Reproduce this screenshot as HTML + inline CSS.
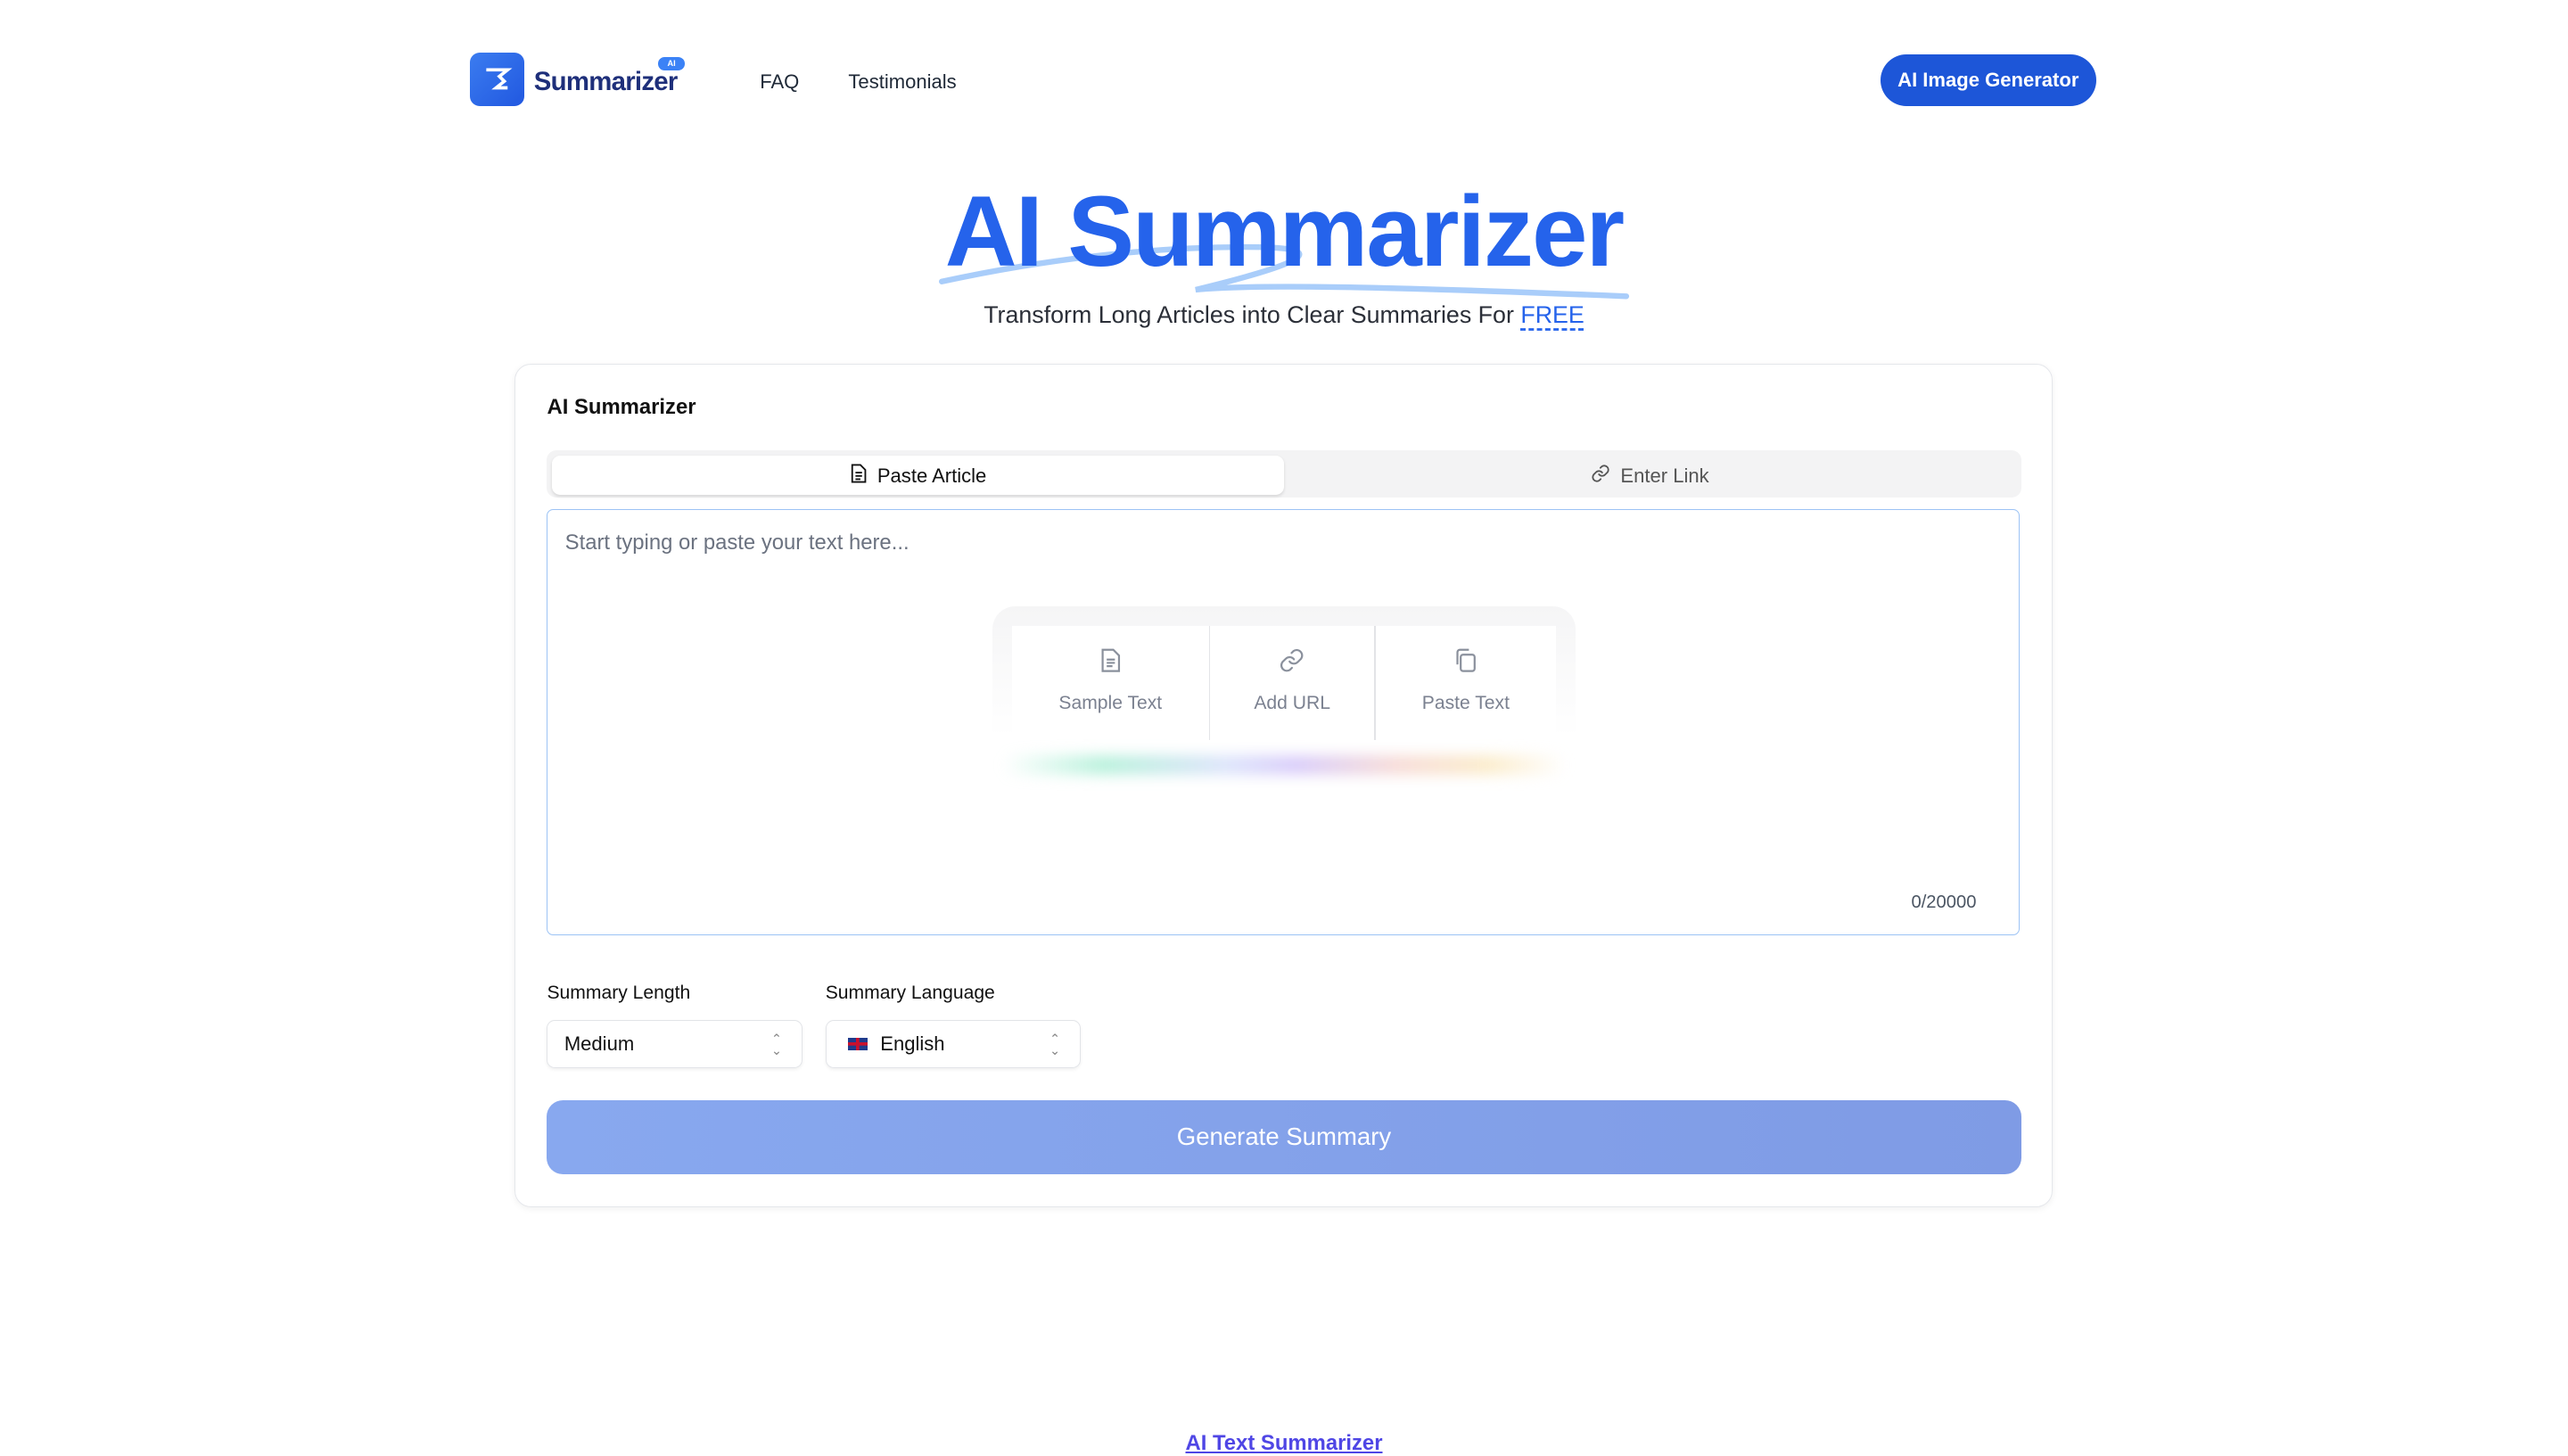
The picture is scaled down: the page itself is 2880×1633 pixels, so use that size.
<!DOCTYPE html>
<html><head><meta charset="utf-8">
<style>
html,body{margin:0;padding:0;background:#fff;}
body{width:1568px;height:882px;zoom:1.836735;position:relative;overflow:hidden;font-family:"Liberation Sans",sans-serif;color:#111827;}
.a{position:absolute;}
.logo{left:287px;top:32px;width:33px;height:33px;border-radius:6px;background:linear-gradient(135deg,#3b7cf0,#2158e0);}
.brand{left:326px;top:41px;font-size:16px;font-weight:bold;color:#1e2f7a;letter-spacing:-0.4px;}
.badge{left:402px;top:35px;width:16px;height:8px;border-radius:4px;background:#3b82f6;color:#fff;font-size:5px;font-weight:bold;text-align:center;line-height:8px;}
.nav{top:43px;font-size:12px;color:#1f2937;}
.btn{left:1148px;top:33px;width:132px;height:32px;border-radius:16px;background:#1d56d8;color:#fff;font-weight:bold;font-size:12px;text-align:center;line-height:32px;}
.title{left:0;width:1568px;top:106px;text-align:center;font-size:61px;font-weight:bold;color:#2563eb;letter-spacing:-1px;}
.sub{left:0;width:1568px;top:184px;text-align:center;font-size:14.6px;color:#2b2f38;}
.sub span{color:#2563eb;text-decoration:underline dashed;text-underline-offset:3px;}
.card{left:314px;top:222px;width:938px;height:514px;border:1px solid #e5e7eb;border-radius:10px;box-shadow:0 1px 4px rgba(0,0,0,.06);}
.tabs{left:334px;top:275px;width:900px;height:29px;background:#f3f3f4;border-radius:6px;}
.tab1{left:337px;top:278px;width:447px;height:24px;background:#fff;border-radius:5px;box-shadow:0 1px 2px rgba(0,0,0,.12);font-size:12px;text-align:center;line-height:25px;color:#111;}
.tab2{left:784px;top:278px;width:447px;height:24px;font-size:12px;text-align:center;line-height:25px;color:#555;}
.ta{left:334px;top:311px;width:898px;height:259px;border:1px solid #9cc3f5;border-radius:4px;}
.ph{left:345px;top:324px;font-size:13px;color:#6b7280;}
.qa{left:606px;top:370px;width:356px;height:100px;border-radius:14px;background:linear-gradient(#f5f5f6,#fff 80%);}
.qi{top:382px;height:70px;background:#fff;text-align:center;font-size:11.5px;color:#7b8190;}
.qi svg{display:block;margin:13px auto 12px;}
.glow{left:612px;top:461px;width:344px;height:12px;border-radius:6px;filter:blur(4px);background:linear-gradient(90deg,rgba(160,240,220,0),#b9f1dc 18%,#dde4fb 40%,#d9cdfa 52%,#f7dcd8 70%,#fbeccb 86%,rgba(255,240,200,0));}
.cnt{left:1167px;top:545px;font-size:11px;color:#4b5563;}
.lbl{top:600px;font-size:11.5px;color:#111;}
.sel{top:623px;width:155px;height:28px;border:1px solid #e2e4e8;border-radius:5px;box-shadow:0 1px 2px rgba(0,0,0,.06);font-size:12px;line-height:28px;color:#111;}
.gen{left:334px;top:672px;width:900px;height:45px;border-radius:10px;background:linear-gradient(90deg,#88a8ef,#7f9be5);color:#fff;font-size:15px;text-align:center;line-height:45px;}
.bot{left:0;width:1568px;top:874px;text-align:center;font-size:13px;font-weight:bold;color:#4f46e5;text-decoration:underline;}
</style></head><body>
<div class="a logo"><svg width="33" height="33" viewBox="0 0 33 33"><path d="M10 10.5h13l-5 4 3 3-5 4h7" stroke="#fff" stroke-width="2" fill="none"/></svg></div>
<div class="a brand">Summarizer</div>
<div class="a badge">AI</div>
<div class="a nav" style="left:464px">FAQ</div>
<div class="a nav" style="left:518px">Testimonials</div>
<div class="a btn">AI Image Generator</div>

<svg class="a" style="left:570px;top:140px" width="430" height="50" viewBox="0 0 430 50"><path d="M5 32 C60 20 130 10 200 11 C240 12 230 20 160 37 C200 33 300 36 423 41" stroke="#a9cdfa" stroke-width="3.5" fill="none" stroke-linecap="round"/></svg>
<div class="a title">AI Summarizer</div>
<div class="a sub">Transform Long Articles into Clear Summaries For <span>FREE</span></div>

<div class="a card"></div>
<div class="a" style="left:334px;top:241px;font-size:13px;font-weight:bold;color:#111">AI Summarizer</div>
<div class="a tabs"></div>
<div class="a tab1"><svg width="11" height="12" viewBox="0 0 11 12" style="vertical-align:-1px;margin-right:6px"><path d="M1.5 .8h5l3 3v7.4h-8z M3.5 5.5h4 M3.5 7.5h4 M3.5 9.5h3" stroke="#111" stroke-width="1" fill="none"/></svg>Paste Article</div>
<div class="a tab2"><svg width="12" height="12" viewBox="0 0 24 24" style="vertical-align:-1px;margin-right:6px"><path d="M10 13a5 5 0 0 0 7.5.5l3-3a5 5 0 0 0-7-7l-1.7 1.7M14 11a5 5 0 0 0-7.5-.5l-3 3a5 5 0 0 0 7 7l1.7-1.7" stroke="#555" stroke-width="2" fill="none" stroke-linecap="round"/></svg>Enter Link</div>
<div class="a ta"></div>
<div class="a ph">Start typing or paste your text here...</div>
<div class="a qa"></div>
<div class="a qi" style="left:618px;width:120px"><svg width="15" height="16" viewBox="0 0 15 16"><path d="M2.5 1.5h6.5l3.5 3.5v9.5h-10z M5 7.5h5 M5 9.5h5 M5 11.5h3.5" stroke="#8a909c" stroke-width="1.2" fill="none"/></svg>Sample Text</div>
<div class="a" style="left:738px;top:382px;width:1px;height:70px;background:#e3e4e7"></div>
<div class="a qi" style="left:739px;width:100px"><svg width="16" height="16" viewBox="0 0 24 24"><path d="M10 13a5 5 0 0 0 7.5.5l3-3a5 5 0 0 0-7-7l-1.7 1.7M14 11a5 5 0 0 0-7.5-.5l-3 3a5 5 0 0 0 7 7l1.7-1.7" stroke="#8a909c" stroke-width="1.8" fill="none" stroke-linecap="round"/></svg>Add URL</div>
<div class="a" style="left:839px;top:382px;width:1px;height:70px;background:#e3e4e7"></div>
<div class="a qi" style="left:840px;width:110px"><svg width="16" height="16" viewBox="0 0 16 16"><rect x="5" y="4.5" width="8.5" height="10" rx="1.5" stroke="#8a909c" stroke-width="1.2" fill="none"/><path d="M3 10.5V3a1.5 1.5 0 0 1 1.5-1.5H10" stroke="#8a909c" stroke-width="1.2" fill="none"/></svg>Paste Text</div>
<div class="a glow"></div>
<div class="a cnt">0/20000</div>

<div class="a lbl" style="left:334px">Summary Length</div>
<div class="a lbl" style="left:504px">Summary Language</div>
<div class="a sel" style="left:334px"><span style="margin-left:10px">Medium</span><span style="position:absolute;right:12px;font-size:8px;color:#888;line-height:7px;top:8px;text-align:center">&#8963;<br>&#8964;</span></div>
<div class="a sel" style="left:504px"><span style="margin-left:13px;display:inline-block;width:12px;height:8px;background:linear-gradient(#c8102e,#c8102e) center/100% 2px no-repeat,linear-gradient(#c8102e,#c8102e) center/2px 100% no-repeat,#1f3b8c;vertical-align:0"></span><span style="margin-left:8px">English</span><span style="position:absolute;right:12px;font-size:8px;color:#888;line-height:7px;top:8px;text-align:center">&#8963;<br>&#8964;</span></div>
<div class="a gen">Generate Summary</div>
<div class="a bot">AI Text Summarizer</div>
</body></html>
